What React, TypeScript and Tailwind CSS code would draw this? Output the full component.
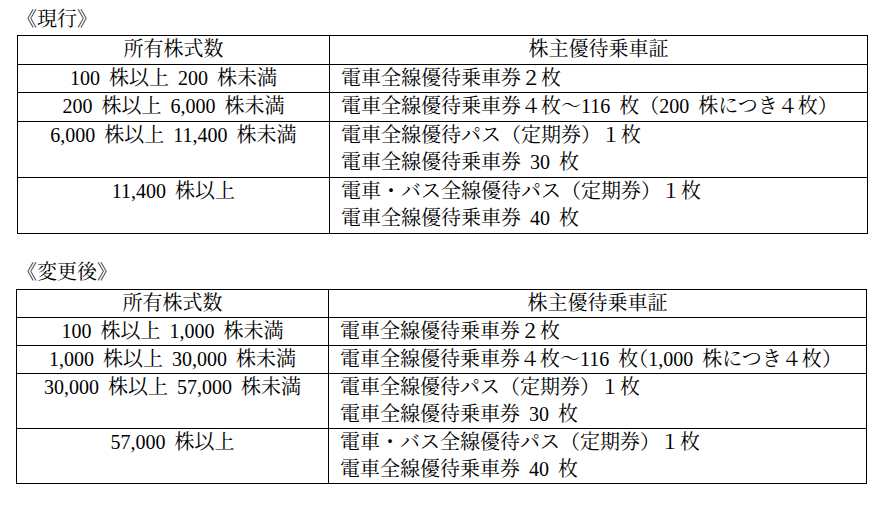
import type { ReactNode } from 'react';

type Row = {
  shares: string;
  benefits: ReactNode[];
};

const halt = (ch: string) => <span className="[font-feature-settings:'halt']">{ch}</span>;

const current: Row[] = [
  { shares: '100 株以上 200 株未満', benefits: ['電車全線優待乗車券２枚'] },
  { shares: '200 株以上 6,000 株未満', benefits: ['電車全線優待乗車券４枚～116 枚（200 株につき４枚）'] },
  {
    shares: '6,000 株以上 11,400 株未満',
    benefits: ['電車全線優待パス（定期券）１枚', '電車全線優待乗車券 30 枚'],
  },
  {
    shares: '11,400 株以上',
    benefits: ['電車・バス全線優待パス（定期券）１枚', '電車全線優待乗車券 40 枚'],
  },
];

const revised: Row[] = [
  { shares: '100 株以上 1,000 株未満', benefits: ['電車全線優待乗車券２枚'] },
  {
    shares: '1,000 株以上 30,000 株未満',
    benefits: [
      <>
        電車全線優待乗車券４枚～116 枚{halt('（')}1,000 株につき４枚{halt('）')}
      </>,
    ],
  },
  {
    shares: '30,000 株以上 57,000 株未満',
    benefits: ['電車全線優待パス（定期券）１枚', '電車全線優待乗車券 30 枚'],
  },
  {
    shares: '57,000 株以上',
    benefits: ['電車・バス全線優待パス（定期券）１枚', '電車全線優待乗車券 40 枚'],
  },
];

function BenefitTable({ rows, className = '' }: { rows: Row[]; className?: string }) {
  return (
    <div className={`w-[851px] border border-black ${className}`}>
      <div className="grid grid-cols-[312px_1fr]">
        <div className="border-r border-black text-center">所有株式数</div>
        <div className="text-center">株主優待乗車証</div>
      </div>
      {rows.map((row) => (
        <div key={row.shares} className="grid grid-cols-[312px_1fr] border-t border-black">
          <div className="border-r border-black text-center">{row.shares}</div>
          <div className="pl-[11px]">
            {row.benefits.map((b, i) => (
              <div key={i}>{b}</div>
            ))}
          </div>
        </div>
      ))}
    </div>
  );
}

export default function App() {
  return (
    <div className="min-h-screen bg-white pt-[5px] pl-[17px] text-black text-[20px] [word-spacing:4px] font-['Liberation_Serif','Noto_Serif_CJK_JP','Noto_Sans_CJK_JP',serif]">
      <h2 className="leading-[28px] mb-[2px]">《現行》</h2>
      <BenefitTable rows={current} className="leading-[27.5px]" />

      <h2 className="leading-[28px] mt-[24px] mb-[3px]">《変更後》</h2>
      <BenefitTable rows={revised} className="-ml-px leading-[27px]" />
    </div>
  );
}
